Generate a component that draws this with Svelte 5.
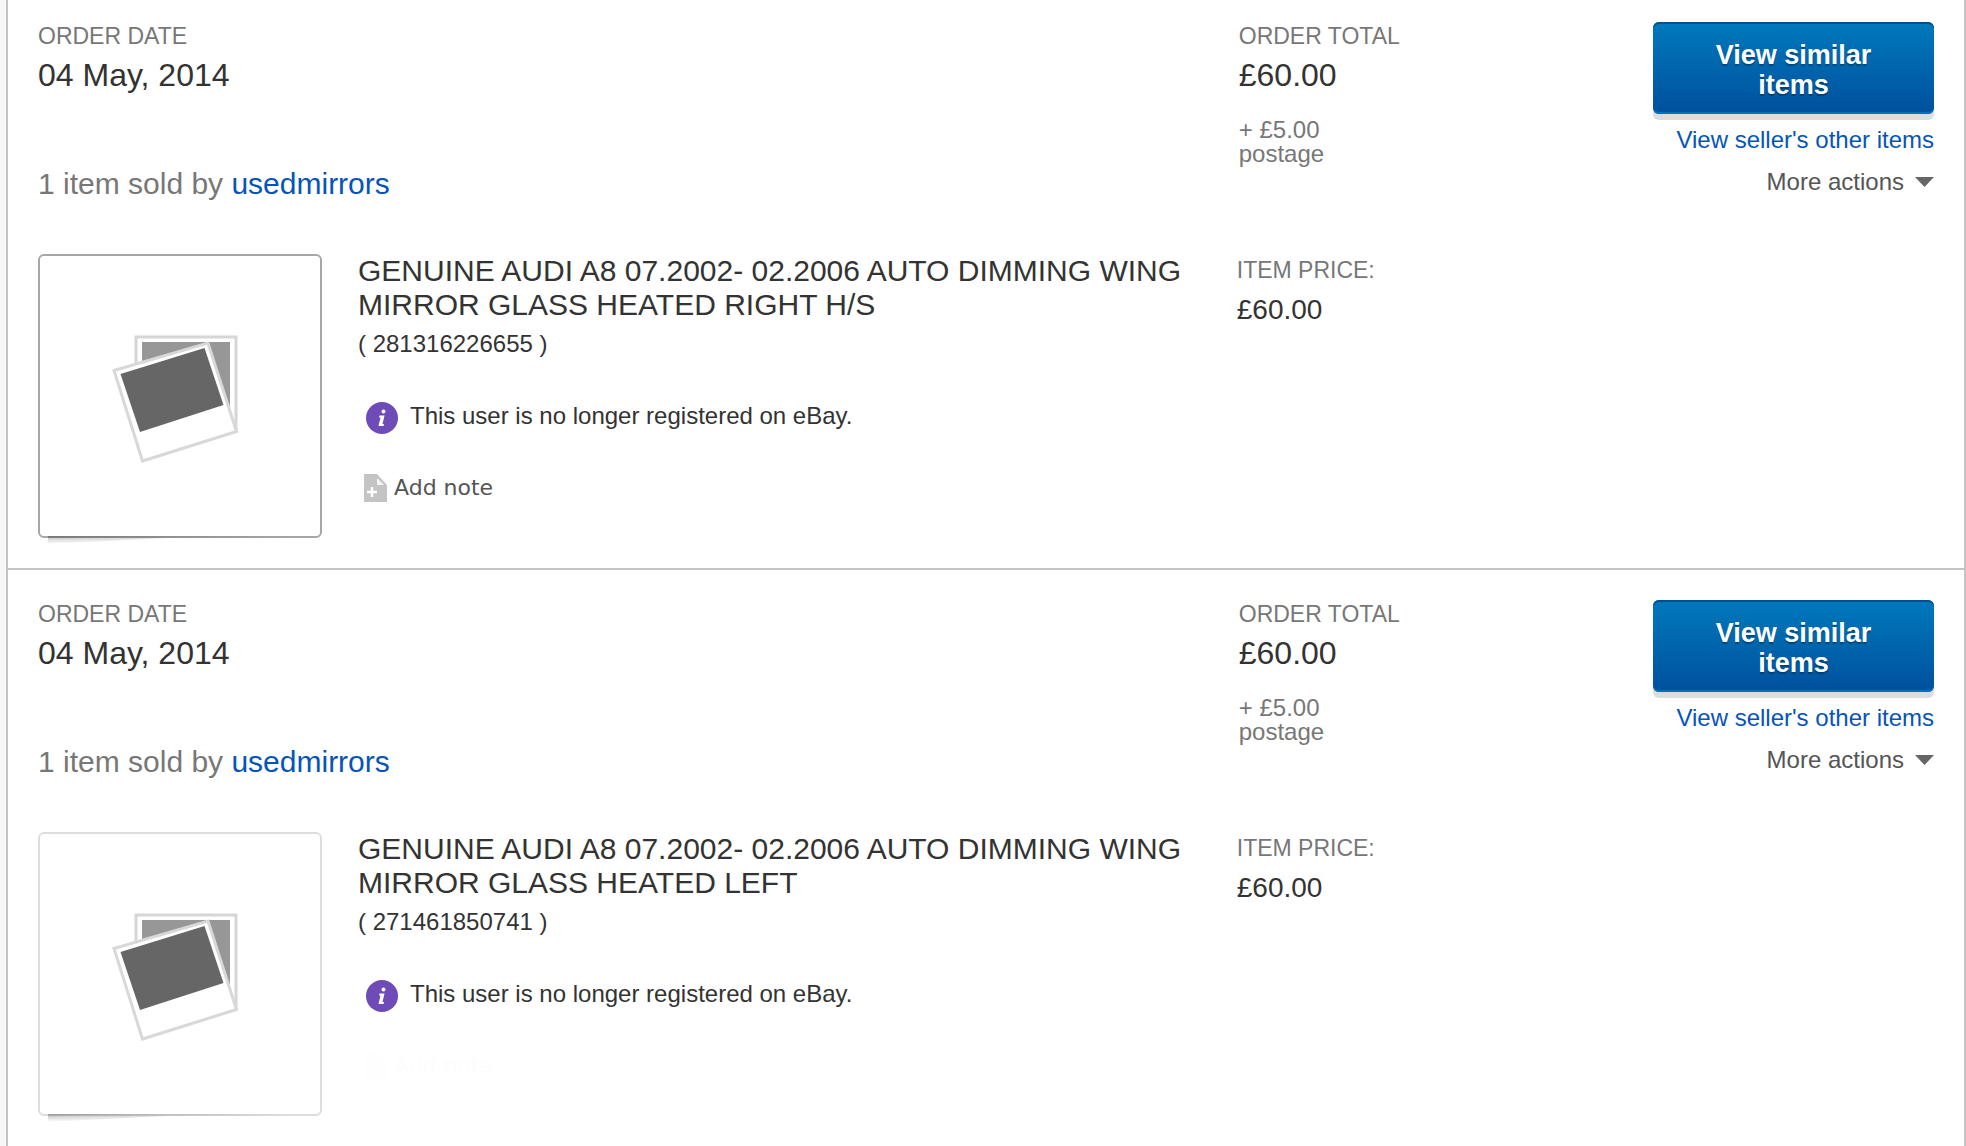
<script>
    let orders = [
        {
            date: '04 May, 2014',
            total: '£60.00',
            postage: '£5.00',
            seller: 'usedmirrors',
            title: 'GENUINE AUDI A8 07.2002- 02.2006 AUTO DIMMING WING MIRROR GLASS HEATED RIGHT H/S',
            itemId: '281316226655',
            price: '£60.00',
            active: true
        },
        {
            date: '04 May, 2014',
            total: '£60.00',
            postage: '£5.00',
            seller: 'usedmirrors',
            title: 'GENUINE AUDI A8 07.2002- 02.2006 AUTO DIMMING WING MIRROR GLASS HEATED LEFT',
            itemId: '271461850741',
            price: '£60.00',
            active: false
        }
    ];
</script>

<main class="orders">
    {#each orders as order}
        <section class="order" class:active={order.active}>
            <div class="row">
                <div>
                    <div class="label">ORDER DATE</div>
                    <div class="value">{order.date}</div>
                    <div class="sold-by">1 item sold by <a href="#seller">{order.seller}</a></div>
                </div>
                <div class="total">
                    <div class="label">ORDER TOTAL</div>
                    <div class="value">{order.total}</div>
                    <div class="postage">+ {order.postage} postage</div>
                </div>
                <div class="actions">
                    <button class="similar">View similar items</button>
                    <a href="#other">View seller's other items</a>
                    <button class="more">
                        More actions
                        <svg width="19" height="10" viewBox="0 0 19 10" aria-hidden="true">
                            <path d="M0 0h19L9.5 10z" fill="#666" />
                        </svg>
                    </button>
                </div>
            </div>

            <div class="row item-row">
                <div class="item">
                    <div class="thumb">
                        <svg width="150" height="150" viewBox="5 1 150 150" aria-hidden="true">
                            <path d="M36 17h100v94H36z" fill="#fff" stroke="#d6d6d6" stroke-width="3" />
                            <path d="M42 22h88v64H42z" fill="#979797" />
                            <path d="M14 50.5L108 23l28.500 88.500L42.500 141z" fill="#fff" stroke="#d8d8d8" stroke-width="3" />
                            <path d="M20.500 54L104.500 28 123.500 85 40 112z" fill="#666" />
                        </svg>
                    </div>
                    <div class="details">
                        <h2>{order.title}</h2>
                        <div class="item-id">( {order.itemId} )</div>
                        <div class="notice">
                            <svg width="32" height="32" viewBox="0 0 32 32" aria-hidden="true">
                                <circle cx="16" cy="16" r="16" fill="#6f4bb8" />
                                <circle cx="17.5" cy="9.5" r="2" fill="#fff" />
                                <path d="M13.500 13.500h5L16.500 22H18l-.5 2h-5l2-8.500h-1.500z" fill="#fff" />
                            </svg>
                            <span>This user is no longer registered on eBay.</span>
                        </div>
                        <button class="note">
                            <svg width="24" height="28" viewBox="0 0 24 28" aria-hidden="true">
                                <path d="M0 0h13l10 11v17H0z" fill="#c4c4c4" />
                                <path d="M13 4v7h7z" fill="#f4f4f4" />
                                <path d="M8 13v10M3 18h10" stroke="#fff" stroke-width="2.5" />
                            </svg>
                            Add note
                        </button>
                    </div>
                </div>
                <div class="price">
                    <div class="label">ITEM PRICE:</div>
                    <div class="amount">{order.price}</div>
                </div>
            </div>
        </section>
    {/each}
</main>

<style>
    :global(body) {
        background: #f7f7f7;
    }

    .orders {
        margin-left: 6px;
        border: solid #c4c4c4;
        border-width: 0 2px;
        background: #fff;
        color: #333;
        font-family: "Liberation Sans", Arial, sans-serif;
        font-size: 24px;
        line-height: 28px;
    }

    .order {
        padding: 30px;
    }

    .order:first-child {
        padding-top: 22px;
    }

    .order + .order {
        border-top: 2px solid #c4c4c4;
    }

    .row {
        display: grid;
        grid-template-columns: minmax(0, 72fr) minmax(0, 25fr) 281px;
    }

    a {
        color: #0654ba;
        text-decoration: none;
    }

    button {
        border: 0;
        padding: 0;
        background: none;
        font: inherit;
        color: #555;
        cursor: pointer;
    }

    .label {
        color: #777;
        font-size: 23px;
    }

    .value {
        margin-top: 5px;
        font-size: 32px;
        line-height: 40px;
    }

    .sold-by {
        margin-top: 71px;
        color: #777;
        font-size: 30px;
        line-height: 36px;
    }

    .total {
        padding-left: 2px;
    }

    .postage {
        max-width: 120px;
        margin-top: 23px;
        color: #777;
        line-height: 24px;
    }

    .actions {
        display: flex;
        flex-direction: column;
        align-items: flex-end;
    }

    .similar {
        width: 100%;
        margin-bottom: 12px;
        padding: 18px 50px 14px;
        border-radius: 6px;
        background: linear-gradient(#0079bc, #00509d);
        box-shadow: inset 0 2px #00508f, inset 0 -2px #0072bc, 0 6px #dcdddd;
        color: #fff;
        font-size: 27px;
        font-weight: bold;
        line-height: 30px;
        text-shadow: 0 2px 1px rgba(0, 0, 0, 0.3);
    }

    .more {
        display: flex;
        align-items: center;
        gap: 11px;
        margin-top: 14px;
    }

    .item-row {
        margin-top: 52px;
    }

    .item {
        display: flex;
        gap: 36px;
        padding-right: 28px;
    }

    .thumb {
        position: relative;
        display: flex;
        flex: none;
        align-items: center;
        justify-content: center;
        box-sizing: border-box;
        width: 284px;
        height: 284px;
        border: 2px solid #ddd;
        border-radius: 6px;
    }

    .active .thumb {
        border-color: #a6a6a6;
    }

    /* curled-page shadow under the bottom left corner */
    .thumb::after {
        content: '';
        position: absolute;
        top: 100%;
        left: 8px;
        width: 240px;
        height: 8px;
        background: linear-gradient(rgba(0, 0, 0, 0.3), rgba(0, 0, 0, 0.15) 40%, transparent);
        clip-path: polygon(0 0, 100% 0, 100% 2px, 50% 2px, 0 100%);
        mask-image: linear-gradient(to right, #000, transparent);
    }

    h2 {
        margin: 0;
        font-size: 30px;
        font-weight: normal;
        line-height: 34px;
    }

    .item-id {
        margin-top: 8px;
    }

    .notice {
        display: flex;
        gap: 12px;
        margin: 44px 0 40px 8px;
    }

    .note {
        display: flex;
        align-items: center;
        gap: 6px;
        margin-left: 6px;
        font-family: "DejaVu Sans", Verdana, sans-serif;
        font-size: 22px;
        opacity: 0.01;
        transition: opacity 0.3s;
    }

    .active .note,
    .order:hover .note {
        opacity: 1;
    }

    .price {
        margin-top: 2px;
    }

    .amount {
        margin-top: 8px;
        font-size: 28px;
        line-height: 36px;
    }
</style>
